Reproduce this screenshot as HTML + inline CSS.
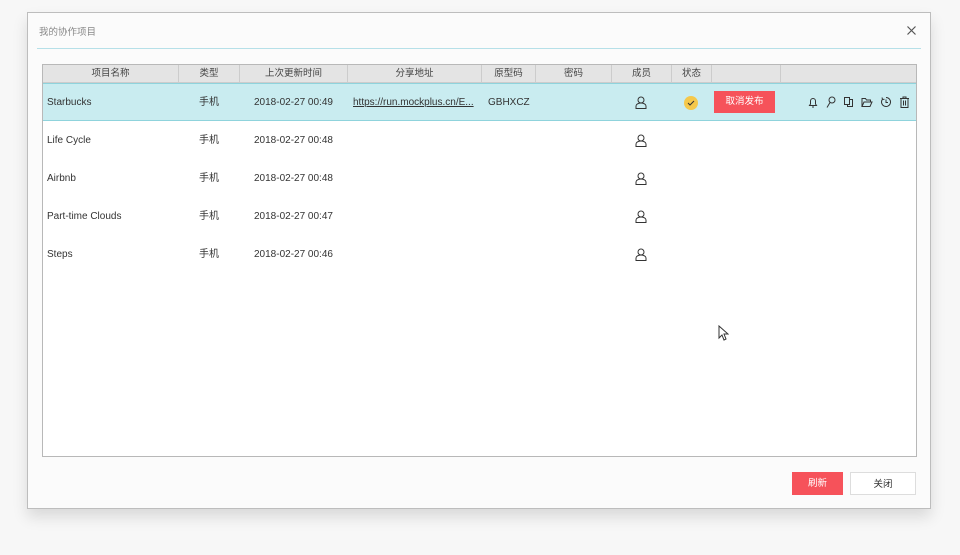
<!DOCTYPE html>
<html><head><meta charset="utf-8"><style>
*{margin:0;padding:0;box-sizing:border-box}
body{width:960px;height:555px;background:#f7f7f7;font-family:"Liberation Sans","Noto Sans CJK SC",sans-serif;font-size:10px;color:#333;position:relative;overflow:hidden}
.dlg{position:absolute;left:27px;top:12px;width:904px;height:497px;background:#fbfbfb;border:1px solid #bdbdbd;box-shadow:0 8px 14px rgba(0,0,0,.12)}
.title{position:absolute;left:11px;top:11px;font-size:9.5px;color:#888}
.line{position:absolute;left:9px;right:9px;top:35px;height:1px;background:#b6e0e8}
.tbl{position:absolute;left:14px;top:51px;width:875px;height:393px;border:1px solid #b8b8b8;background:#fff}
.hd{position:absolute;left:0;top:0;width:100%;height:18px;background:#e4e4e4;border-bottom:1px solid #ccc}
.hd span{position:absolute;top:0;height:17px;line-height:17px;text-align:center;border-right:1px solid #ccc;font-size:9.5px;color:#444}
.row{position:absolute;left:0;width:100%;height:38px}
.row.sel{background:#c9ecf0;border-top:1px solid #8fd3dc;border-bottom:1px solid #8fd3dc}
.c{position:absolute;top:0;line-height:37px;font-size:10px;color:#333;white-space:nowrap}
.btnr{position:absolute;left:671px;top:7px;width:61px;height:22px;background:#f6525a;color:#fff;text-align:center;line-height:22px;font-size:9.5px}
.b{position:absolute;top:459px;height:23px;line-height:23px;text-align:center;font-size:9.5px}
.ic{position:absolute;top:12px}
</style></head><body>
<div class="dlg">
<div class="title">我的协作项目</div>
<svg style="position:absolute;right:14px;top:13px" width="9" height="9" stroke="#555" stroke-width="1.2"><path d="M0.5 0.5l8 8M8.5 0.5l-8 8"/></svg>
<div class="line"></div>
<div class="tbl">
<div class="hd">
<span style="left:0;width:136px">项目名称</span>
<span style="left:136px;width:61px">类型</span>
<span style="left:197px;width:108px">上次更新时间</span>
<span style="left:305px;width:134px">分享地址</span>
<span style="left:439px;width:54px">原型码</span>
<span style="left:493px;width:76px">密码</span>
<span style="left:569px;width:60px">成员</span>
<span style="left:629px;width:40px">状态</span>
<span style="left:669px;width:69px"></span>
</div>
<div class="row sel" style="top:18px">
<span class="c" style="left:4px">Starbucks</span>
<span class="c" style="left:156px">手机</span>
<span class="c" style="left:211px">2018-02-27 00:49</span>
<span class="c" style="left:310px;text-decoration:underline">https://run.mockplus.cn/E...</span>
<span class="c" style="left:445px">GBHXCZ</span>
<svg class="ic" style="left:592px" width="12" height="13" fill="none" stroke="#333"><circle cx="6" cy="4" r="3"/><path d="M1 12.5v-2.5c0-1.5 2-3 5-3s5 1.5 5 3v2.5z"/></svg>
<svg class="ic" style="left:641px" width="14" height="14"><circle cx="7" cy="7" r="7" fill="#f5c84a"/><path d="M4 7l2 2 4-4" stroke="#333" fill="none"/></svg>
<div class="btnr">取消发布</div>
<svg class="ic" style="left:765px" width="10" height="12" fill="none" stroke="#333"><path d="M1.5 9.5h7l-1-1.5v-3a2.5 2.5 0 0 0-5 0v3z M4 11h2"/></svg>
<svg class="ic" style="left:783px" width="10" height="12" fill="none" stroke="#333"><circle cx="6" cy="4" r="3"/><path d="M4 6.5l-3 5"/></svg>
<svg class="ic" style="left:800px" width="11" height="12" fill="none" stroke="#333"><path d="M1.5 1.5h5v7h-5z M6.5 3.5h3v7h-5v-2"/></svg>
<svg class="ic" style="left:818px" width="12" height="12" fill="none" stroke="#333"><path d="M1 10.5v-8h3.5l1 1.5h4v2 M1 10.5l2-4.5h8l-2 4.5z"/></svg>
<svg class="ic" style="left:837px" width="12" height="12" fill="none" stroke="#333"><path d="M6 1.5a4.5 4.5 0 1 1-3.5 1.7 M6 3.5v3h2 M2 1.5l.5 2 2-.3"/></svg>
<svg class="ic" style="left:856px" width="11" height="12" fill="none" stroke="#333"><path d="M1 2.5h9 M4 2.5v-1.5h3v1.5 M2 2.5v9h7v-9 M4.5 4.5v5 M6.5 4.5v5"/></svg>
</div>
<div class="row" style="top:57px"><span class="c" style="left:4px">Life Cycle</span><span class="c" style="left:156px">手机</span><span class="c" style="left:211px">2018-02-27 00:48</span><svg class="ic" style="left:592px" width="12" height="13" fill="none" stroke="#333"><circle cx="6" cy="4" r="3"/><path d="M1 12.5v-2.5c0-1.5 2-3 5-3s5 1.5 5 3v2.5z"/></svg></div>
<div class="row" style="top:95px"><span class="c" style="left:4px">Airbnb</span><span class="c" style="left:156px">手机</span><span class="c" style="left:211px">2018-02-27 00:48</span><svg class="ic" style="left:592px" width="12" height="13" fill="none" stroke="#333"><circle cx="6" cy="4" r="3"/><path d="M1 12.5v-2.5c0-1.5 2-3 5-3s5 1.5 5 3v2.5z"/></svg></div>
<div class="row" style="top:133px"><span class="c" style="left:4px">Part-time Clouds</span><span class="c" style="left:156px">手机</span><span class="c" style="left:211px">2018-02-27 00:47</span><svg class="ic" style="left:592px" width="12" height="13" fill="none" stroke="#333"><circle cx="6" cy="4" r="3"/><path d="M1 12.5v-2.5c0-1.5 2-3 5-3s5 1.5 5 3v2.5z"/></svg></div>
<div class="row" style="top:171px"><span class="c" style="left:4px">Steps</span><span class="c" style="left:156px">手机</span><span class="c" style="left:211px">2018-02-27 00:46</span><svg class="ic" style="left:592px" width="12" height="13" fill="none" stroke="#333"><circle cx="6" cy="4" r="3"/><path d="M1 12.5v-2.5c0-1.5 2-3 5-3s5 1.5 5 3v2.5z"/></svg></div>
</div>
<div class="b" style="left:764px;width:51px;background:#f6525a;color:#fff">刷新</div>
<div class="b" style="left:822px;width:66px;background:#fff;border:1px solid #ddd">关闭</div>
</div>
<svg style="position:absolute;left:718px;top:325px" width="11" height="16"><path d="M1 1v12l3-3 2 5 2-1-2-5h4z" fill="#fff" stroke="#333"/></svg>
</body></html>
